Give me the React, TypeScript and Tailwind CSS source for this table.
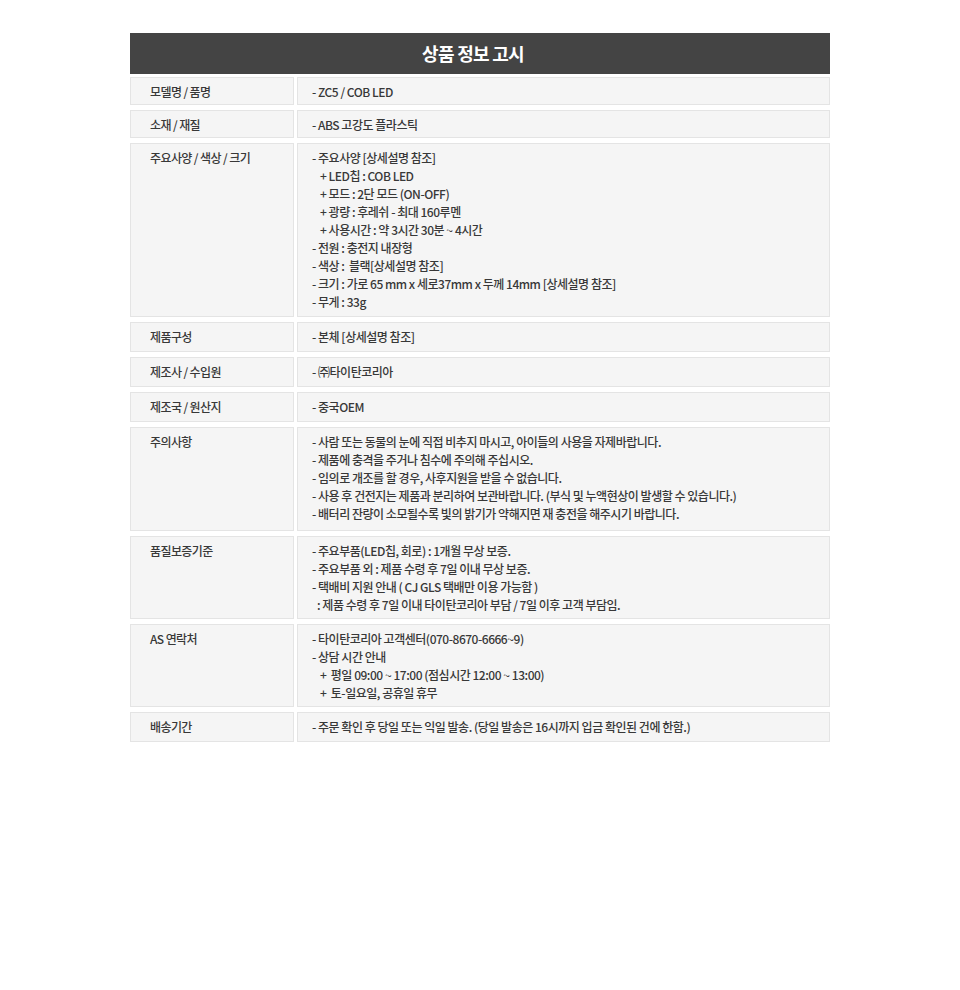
const font = {
  fontFamily: '"Noto Sans CJK KR", "Noto Sans", sans-serif',
};

type Line = { text: string; indent?: "sub" | "colon" };

interface Row {
  label: string;
  height: string;
  lines: Line[];
}

const rows: Row[] = [
  { label: "모델명 / 품명", height: "h-[28px]", lines: [{ text: "- ZC5 / COB LED" }] },
  { label: "소재 / 재질", height: "h-[28px]", lines: [{ text: "- ABS 고강도 플라스틱" }] },
  {
    label: "주요사양 / 색상 / 크기",
    height: "h-[174px]",
    lines: [
      { text: "- 주요사양 [상세설명 참조]" },
      { text: "+ LED칩 : COB LED", indent: "sub" },
      { text: "+ 모드 : 2단 모드 (ON-OFF)", indent: "sub" },
      { text: "+ 광량 : 후레쉬 - 최대 160루멘", indent: "sub" },
      { text: "+ 사용시간 : 약 3시간 30분 ~ 4시간", indent: "sub" },
      { text: "- 전원 : 충전지 내장형" },
      { text: "- 색상 :  블랙[상세설명 참조]" },
      { text: "- 크기 : 가로 65 mm x 세로37mm x 두께 14mm [상세설명 참조]" },
      { text: "- 무게 : 33g" },
    ],
  },
  { label: "제품구성", height: "h-[30px]", lines: [{ text: "- 본체 [상세설명 참조]" }] },
  { label: "제조사 / 수입원", height: "h-[30px]", lines: [{ text: "- ㈜타이탄코리아" }] },
  { label: "제조국 / 원산지", height: "h-[30px]", lines: [{ text: "- 중국OEM" }] },
  {
    label: "주의사항",
    height: "h-[104px]",
    lines: [
      { text: "- 사람 또는 동물의 눈에 직접 비추지 마시고, 아이들의 사용을 자제바랍니다." },
      { text: "- 제품에 충격을 주거나 침수에 주의해 주십시오." },
      { text: "- 임의로 개조를 할 경우, 사후지원을 받을 수 없습니다." },
      { text: "- 사용 후 건전지는 제품과 분리하여 보관바랍니다. (부식 및 누액현상이 발생할 수 있습니다.)" },
      { text: "- 배터리 잔량이 소모될수록 빛의 밝기가 약해지면 재 충전을 해주시기 바랍니다." },
    ],
  },
  {
    label: "품질보증기준",
    height: "h-[83px]",
    lines: [
      { text: "- 주요부품(LED칩, 회로) : 1개월 무상 보증." },
      { text: "- 주요부품 외 : 제품 수령 후 7일 이내 무상 보증." },
      { text: "- 택배비 지원 안내 ( CJ GLS 택배만 이용 가능함 )" },
      { text: ": 제품 수령 후 7일 이내 타이탄코리아 부담 / 7일 이후 고객 부담임.", indent: "colon" },
    ],
  },
  {
    label: "AS 연락처",
    height: "h-[83px]",
    lines: [
      { text: "- 타이탄코리아 고객센터(070-8670-6666~9)" },
      { text: "- 상담 시간 안내" },
      { text: "+  평일 09:00 ~ 17:00 (점심시간 12:00 ~ 13:00)", indent: "sub" },
      { text: "+  토-일요일, 공휴일 휴무", indent: "sub" },
    ],
  },
  {
    label: "배송기간",
    height: "h-[30px]",
    lines: [{ text: "- 주문 확인 후 당일 또는 익일 발송. (당일 발송은 16시까지 입금 확인된 건에 한함.)" }],
  },
];

function indentClass(indent?: Line["indent"]) {
  if (indent === "sub") return "pl-[8px]";
  if (indent === "colon") return "pl-[5px]";
  return "";
}

export default function App() {
  return (
    <div className="min-h-[990px] bg-white pt-[33px]" style={font}>
      <div className="mx-auto w-[700px]">
        <div className="flex h-[41px] items-center justify-center bg-[#444444] pr-[14px] text-[18px] font-bold tracking-[-0.04em] text-white">
          상품 정보 고시
        </div>
        <div className="mt-[3px] flex flex-col gap-[5px]">
          {rows.map((row) => (
            <div key={row.label} className={`grid grid-cols-[164px_533px] gap-[3px] ${row.height}`}>
              <div className="border border-[#e4e4e4] bg-[#f5f5f5] pl-[19px] pt-[5px] text-[12px] font-medium leading-[18px] tracking-[-0.05em] text-[#383838]">
                {row.label}
              </div>
              <div className="border border-[#e4e4e4] bg-[#f5f5f5] pl-[14px] pt-[5px] text-[12px] font-medium leading-[18px] tracking-[-0.04em] text-[#383838]">
                {row.lines.map((line, i) => (
                  <div key={i} className={`whitespace-pre ${indentClass(line.indent)}`}>
                    {line.text}
                  </div>
                ))}
              </div>
            </div>
          ))}
        </div>
      </div>
    </div>
  );
}
